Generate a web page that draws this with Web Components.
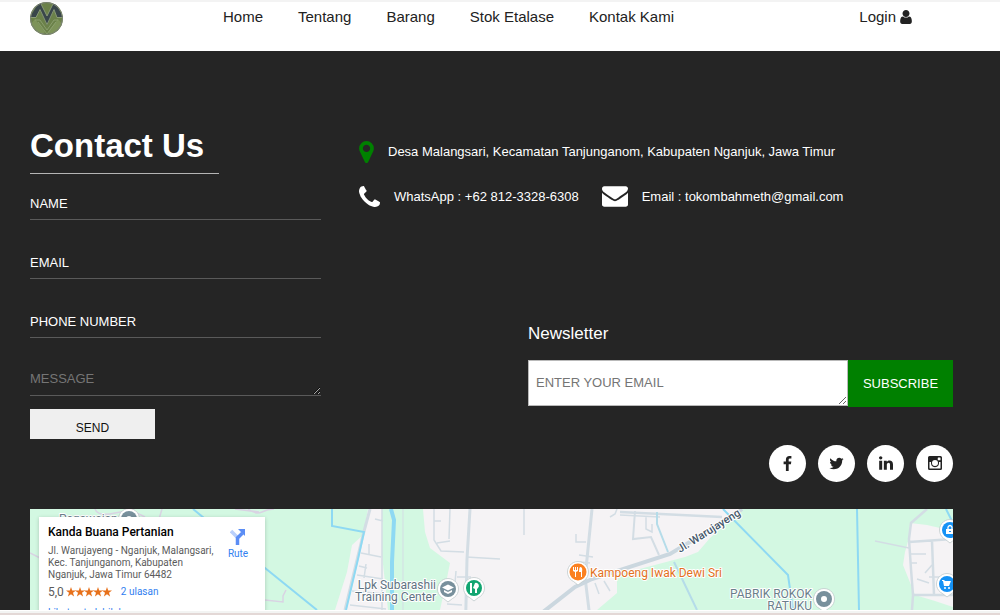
<!DOCTYPE html>
<html lang="id">
<head>
<meta charset="utf-8">
<meta name="viewport" content="width=device-width, initial-scale=1">
<title>Kontak Kami</title>
<style>
  html, body { margin: 0; height: 100%; }
  body { font: 13px/20px "Liberation Sans", Arial, sans-serif; color: #fff; background: #252525; }
</style>
</head>
<body>
<toko-page>
  <site-header slot="header"></site-header>
  <contact-form slot="form"></contact-form>
  <contact-info slot="info"></contact-info>
  <news-letter slot="news"></news-letter>
  <social-links slot="social"></social-links>
  <store-map slot="map"></store-map>
</toko-page>

<script>
const define = (name, html) => {
  const template = document.createElement('template');
  template.innerHTML = html;
  customElements.define(name, class extends HTMLElement {
    constructor() {
      super();
      this.attachShadow({ mode: 'open' }).append(template.content.cloneNode(true));
    }
  });
};

/* Icon shapes: viewBox and path, looked up by the name attribute. */
const ICONS = {
  user: ['0 128 1280 1536', 'M1280 1399q0 109-62.5 187t-150.5 78h-854q-88 0-150.5-78t-62.5-187q0-85 8.500-160.500t31.500-152 58.500-131 94-89 134.500-34.500q131 128 313 128t313-128q76 0 134.500 34.500t94 89 58.500 131 31.500 152 8.500 160.500zm-256-887q0 159-112.500 271.500t-271.500 112.500-271.500-112.500-112.500-271.500 112.500-271.500 271.500-112.500 271.500 112.500 112.500 271.500z'],
  marker: ['0 128 1024 1536', 'M768 640q0-106-75-181t-181-75-181 75-75 181 75 181 181 75 181-75 75-181zm256 0q0 109-33 179l-364 774q-16 33-47.5 52t-67.5 19-67.5-19-46.5-52l-365-774q-33-70-33-179 0-212 150-362t362-150 362 150 150 362z'],
  phone: ['0 128 1408 1408', 'M1408 1240q0 27-10 70.5t-21 68.5q-21 50-122 106-94 51-186 51-27 0-52.5-3.5t-57.5-12.5-47.5-14.5-55.5-20.5-49-18q-98-35-175-83-128-79-264.5-215.5t-215.5-264.5q-48-77-83-175-3-9-18-49t-20.5-55.5-14.5-47.5-12.5-57.5-3.5-52.5q0-92 51-186 56-101 106-122 25-11 68.5-21t70.5-10q14 0 21 3 18 6 53 76 11 19 30 54t35 63.5 31 53.5q3 4 17.5 25t21.5 35.5 7 28.5q0 20-28.5 50t-62 55-62 53-28.5 46q0 9 5 22.5t8.5 20.5 14 24 11.5 19q76 137 174 235t235 174q2 1 19 11.5t24 14 20.5 8.5 22.5 5q18 0 46-28.5t53-62 55-62 50-28.5q14 0 28.5 7t35.5 21.5 25 17.5q25 15 53.5 31t63.5 35 54 30q70 35 76 53 3 7 3 21z'],
  envelope: ['0 256 1792 1408', 'M1792 710v794q0 66-47 113t-113 47h-1472q-66 0-113-47t-47-113v-794q44 49 101 87 362 246 497 345 57 42 92.5 65.5t94.5 48 110 24.5h2q51 0 110-24.5t94.5-48 92.5-65.5q170-123 498-345 57-39 100-87zm0-294q0 79-49 151t-122 123q-376 261-468 325-10 7-42.5 31t-54 38.8-52 33.2-57.5 27-50 9h-2q-23 0-50-9t-57.5-27-52-33.2-54-38.8-42.5-31q-91-64-262-182.5t-205-142.5q-62-42-117-115.500t-55-136.500q0-78 41.500-130t118.500-52h1472q65 0 112.500 47t47.500 113z'],
  facebook: ['31 0 864 1664', 'M895 12v264h-157q-86 0-116 36t-30 108v189h293l-39 296h-254v759h-306v-759h-255v-296h255v-218q0-186 104-288.500t277-102.500q147 0 228 12z'],
  twitter: ['0 256 1664 1280', 'M1620 408q-67 98-162 167 1 14 1 42 0 130-38 259.500t-115.500 248.500-184.500 210.500-258 146-323 54.500q-271 0-496-145 35 4 78 4 225 0 401-138-105-2-188-64.500t-114-159.500q33 5 61 5 43 0 85-11-112-23-185.500-111.500t-73.500-205.500v-4q68 38 146 41-66-44-105-115t-39-154q0-88 44-163 121 149 294.500 238.500t371.500 99.500q-8-38-8-74 0-134 94.500-228.500t228.500-94.500q140 0 236 102 109-21 205-78-37 115-142 178 93-10 186-50z'],
  linkedin: ['0 148 1536 1468', 'M349 625v991h-330v-991h330zm21-306q1 73-50.5 122t-135.5 49h-2q-82 0-132-49t-50-122q0-74 51.500-122.500t134.500-48.500 133 48.500 51 122.500zm1166 729v568h-329v-530q0-105-40.500-164.500t-126.500-59.500q-63 0-105.500 34.500t-63.500 85.500q-11 30-11 81v553h-329q2-399 2-647t-1-296l-1-48h329v144h-2q20-32 41-56t56.500-52 87-43.500 114.500-15.500q171 0 275 113.500t104 332.500z'],
  instagram: ['0 0 28 28', 'M3 0h22q3 0 3 3v22q0 3-3 3h-22q-3 0-3-3v-22q0-3 3-3zm0 12v12q0 1 1 1h20q1 0 1-1v-12h-3q1 10-8 10.500q-9-.5-8-10.500zm11-4a6 6 0 1 0 0 12a6 6 0 1 0 0-12zm6.500-5q-1 0-1 1v3.500q0 1 1 1h3.500q1 0 1-1v-3.500q0-1-1-1z']
};
customElements.define('fa-icon', class extends HTMLElement {
  constructor() {
    super();
    this.attachShadow({ mode: 'open' });
  }
  connectedCallback() {
    const [box, path] = ICONS[this.getAttribute('name')];
    this.shadowRoot.innerHTML = `
      <style>:host { display: block; flex: none } svg { display: block; width: 100%; height: 100%; fill: currentColor }</style>
      <svg viewBox="${box}" aria-hidden="true"><path fill-rule="evenodd" d="${path}"/></svg>`;
  }
});

define('toko-page', `
  <style>
    :host { display: flex; flex-direction: column; height: 100vh; }
    main { flex: 1; min-height: 0; overflow: hidden; padding: 75px 47px 0 30px; }
    .top { display: grid; grid-template-columns: 291px 1fr; column-gap: 38px; }
    .side { display: flex; flex-direction: column; }
    ::slotted([slot=news]), ::slotted([slot=social]) { align-self: flex-end; }
    .edge { height: 2px; flex: none; background: #f3f4f3; border-bottom: 2px solid #e3d8d6; border-top: 1px solid #fff; }
    @media (max-width: 820px) { .top { grid-template-columns: 1fr; row-gap: 30px; } main { overflow: visible; } }
  </style>
  <slot name="header"></slot>
  <main>
    <div class="top">
      <slot name="form"></slot>
      <div class="side">
        <slot name="info"></slot>
        <slot name="news"></slot>
        <slot name="social"></slot>
      </div>
    </div>
    <slot name="map"></slot>
  </main>
  <div class="edge"></div>`);

define('site-header', `
  <style>
    :host { display: flex; flex: none; align-items: flex-start; height: 49px; padding: 0 88px 0 30px;
      background: #fff; border-top: 2px solid #f3f3f3; font-size: 15px; line-height: 30px; }
    .logo { flex: none; width: 33px; height: 33px; }
    .logo svg { display: block; width: 33px; height: 33px; }
    nav { display: flex; gap: 35px; margin: 0 auto 0 160px; }
    a { color: #222; text-decoration: none; white-space: nowrap; }
    .login { display: flex; align-items: center; gap: 4px; }
    fa-icon { width: 12px; height: 14px; }
  </style>
  <a class="logo" href="#" aria-label="Beranda">
    <svg viewBox="0 0 33 33" aria-hidden="true">
      <defs><clipPath id="c"><circle cx="16.500" cy="16.500" r="16.500"/></clipPath></defs>
      <g clip-path="url(#c)">
        <path fill="#6b8149" d="M0 0h33v33H0z"/>
        <path fill="#7d9359" d="M5 17l10 13-3 3-12-10zM28 17l-10 13 3 3 12-10z"/>
        <path fill="#39464a" d="M0 15L8 2l3 0 6 12 6-12h3l7 13h-6l-3-7-7 15-7-15-4 7z"/>
        <path fill="none" stroke="#94a482" stroke-width=".8" d="M0 15.500h6l4-8 7 15 7-15 3 8h6M11 2l6 12 6-12"/>
        <path fill="none" stroke="#92a577" stroke-width=".8" d="M5 18h5l7 10 7-10h4M8 20l9 12 9-12"/>
      </g>
      <circle cx="16.500" cy="16.500" r="16" fill="none" stroke="#7c8278"/>
    </svg>
  </a>
  <nav>
    <a href="#">Home</a><a href="#">Tentang</a><a href="#">Barang</a><a href="#">Stok Etalase</a><a href="#">Kontak Kami</a>
  </nav>
  <a class="login" href="#">Login <fa-icon name="user"></fa-icon></a>`);

define('contact-form', `
  <style>
    :host { display: block; }
    h1 { width: fit-content; margin: 0; padding: 0 15px 7px 0; border-bottom: 1px solid #b5b5b5; font-size: 33px; line-height: 40px; }
    form { display: flex; flex-direction: column; margin-top: 20px; gap: 33px; }
    .field { display: grid; }
    .field > * { grid-area: 1 / 1; }
    label { pointer-events: none; }
    input, textarea { box-sizing: border-box; width: 100%; margin: 0; padding: 0; border: 0; border-bottom: 1px solid #5a5a5a;
      border-radius: 0; outline: 0; background: none; color: #fff; font: inherit; }
    input { height: 26px; }
    .last { display: flex; flex-direction: column; align-items: flex-start; gap: 13px; }
    textarea { height: 25px; min-height: 25px; line-height: 16px; }
    textarea::placeholder { color: #757575; }
    button { width: 125px; height: 30px; margin: 0; padding: 8px 0 0; border: 0; background: #efefef; color: #111; font: inherit; font-size: 12px; }
  </style>
  <h1>Contact Us</h1>
  <form>
    <div class="field"><input id="n" type="text"><label for="n">NAME</label></div>
    <div class="field"><input id="e" type="email"><label for="e">EMAIL</label></div>
    <div class="field"><input id="p" type="tel"><label for="p">PHONE NUMBER</label></div>
    <div class="last">
      <textarea aria-label="Message" placeholder="MESSAGE"></textarea>
      <button type="button">SEND</button>
    </div>
  </form>`);

define('contact-info', `
  <style>
    :host { display: flex; flex-direction: column; gap: 24px; padding-top: 16px; }
    .row { display: flex; gap: 23px; }
    .item { display: flex; align-items: center; gap: 14px; white-space: nowrap; }
    .marker { width: 15px; height: 22px; margin: -1px 0; color: green; }
    .phone { width: 21px; height: 21px; }
    .mail { width: 26px; height: 21px; }
  </style>
  <div class="row"><span class="item"><fa-icon class="marker" name="marker"></fa-icon><span>Desa Malangsari, Kecamatan Tanjunganom, Kabupaten Nganjuk, Jawa Timur</span></span></div>
  <div class="row">
    <span class="item"><fa-icon class="phone" name="phone"></fa-icon><span>WhatsApp : +62 812-3328-6308</span></span>
    <span class="item"><fa-icon class="mail" name="envelope"></fa-icon><span>Email : tokombahmeth@gmail.com</span></span>
  </div>`);

define('news-letter', `
  <style>
    :host { display: block; width: 425px; max-width: 100%; margin-top: 117px; }
    label { display: block; margin-bottom: 16px; font-size: 17px; }
    .bar { display: flex; align-items: flex-start; }
    textarea { box-sizing: border-box; flex: 1; min-width: 0; height: 46px; margin: 0; padding: 12px 7px; border: 1px solid #b9b9b9;
      border-radius: 0; outline: 0; background: #fff; color: #222; font: inherit; overflow: hidden; }
    textarea::placeholder { color: #757575; }
    button { width: 105px; height: 47px; padding: 0; border: 0; background: green; color: #fff; font: inherit; }
  </style>
  <label for="m">Newsletter</label>
  <div class="bar"><textarea id="m" rows="1" placeholder="ENTER YOUR EMAIL"></textarea><button type="button">SUBSCRIBE</button></div>`);

define('social-links', `
  <style>
    :host { display: flex; gap: 12px; margin-top: 38px; }
    a { display: grid; place-items: center; width: 37px; height: 36px; padding-bottom: 1px; box-sizing: border-box; height: 37px; border-radius: 50%; background: #fff; color: #222; }
    fa-icon { width: 14px; height: 14px; }
    [name=facebook], [name=twitter] { width: 15px; height: 15px; }
  </style>
  <a href="#" aria-label="Facebook"><fa-icon name="facebook"></fa-icon></a>
  <a href="#" aria-label="Twitter"><fa-icon name="twitter"></fa-icon></a>
  <a href="#" aria-label="LinkedIn"><fa-icon name="linkedin"></fa-icon></a>
  <a href="#" aria-label="Instagram"><fa-icon name="instagram"></fa-icon></a>`);

define('store-map', `
  <style>
    :host { display: block; position: relative; height: 240px; margin-top: 27px; overflow: hidden; background: #d3f8e2;
      font-family: Roboto, sans-serif; }
    .map { display: block; width: 100%; height: 100%; }
    .map text { font-size: 12px; stroke: #fff; stroke-width: 2px; paint-order: stroke; stroke-linejoin: round; }
    .map .road { font-size: 11px; font-weight: 500; }
    .card { position: absolute; left: 9px; top: 8px; box-sizing: border-box; width: 226px; padding: 9px 9px 12px; background: #fff;
      box-shadow: 0 1px 4px #0003; color: #5b5b5b; font-size: 10px; line-height: 12px; }
    .cols { display: flex; justify-content: space-between; }
    h2 { margin: 0 0 6px; color: #000; font-size: 12px; line-height: 13px; font-weight: 500; white-space: nowrap; }
    p { margin: 0; }
    .card a { color: #3180f0; text-decoration: none; }
    .route { display: flex; flex-direction: column; align-items: center; gap: 3px; width: 36px; padding-top: 2px; }
    .rate { display: flex; align-items: center; gap: 2px; margin: 5px 0 9px; }
    .rate b { font-size: 12px; font-weight: 400; }
    .rate a { margin-left: 7px; }
  </style>
  <svg class="map" viewBox="0 0 923 240" preserveAspectRatio="xMinYMin slice" role="img" aria-label="Peta">
    <defs>
      <path id="pin" d="M0 13L-4.500 9.500A10.500 10.500 0 1 1 4.500 9.500z" fill="#fff" stroke="#b9c4c6" stroke-width=".7"/>
    </defs>
    <g fill="#f5f3f5">
      <path d="M338 0L333 26 322 36 317 63 305 101 280 240H375L358 101 352 46V0z"/>
      <path d="M393 0L395 23 400 39 420 54 417 69 410 101 400 240H480L567 101 587 84V66L655 48 668 43 680 29 712 0z"/>
      <path d="M880 14L897 16 923 22V98L905 92 885 86 873 56 875 43 879 29z"/>
    </g>
    <g fill="none" stroke="#d3dde4" stroke-width="1.500">
      <path stroke="#d9d3e3" d="M65 0q3 8 20 4t30 4M132 0l-3 10M218 0q8 6 14 3t12-3M0 44l10 5M205 0l24 3M235 91l18 2v-6l3-6"/>
      <path d="M331 44l20 4M339 35v10M329 57l8 2M327 66l26 4M336 55l-2 14M322 82l33 3M320 96l36 4M345 10l8 2M352 0v101"/>
      <path stroke-width="1" d="M373 0v101"/>
      <path d="M404 0v31l7 11 23 1M404 12h7M420 0l-1 30M407 34l13-2M426 62l-1 12M427 68h14M417 95l15 1M436 48l34 2M494 0v26M546 25v8h10M549 46l14 2M550 53l10 1M565 74l4 11M574 72l6 10M587 0l-2 5-5 3M590 6l40 2M616 8v12l6 3v-8"/>
      <path stroke-width="3" d="M340 0L333 26 315 101M440 0L437 50 435 140M562 0L557 50 555 68 559 101V200"/>
      <path stroke-width="2" d="M605 2l-2 28 18-2 8 18"/>
      <path stroke-width="2.500" d="M897 0L881 14 879 30 881 60 883 86 882 101M879 33l44-3M902 32l2 54M883 86h40M590 3l102 5"/>
      <path d="M845 32l34 7M880 45h16M880 54h7M895 64l7-8M887 70l12 4M899 68h24"/>
    </g>
    <path fill="none" stroke="#cbd7df" stroke-width="4" d="M460 150L513 103 545 78 562 70 640 45 670 27 712 0"/>
    <g fill="none" stroke="#8ed9f3" stroke-width="2">
      <path d="M163 0L235 59 287 101M302 0V17L334 23 328 50 316 101M693 0L758 66 763 101M827 0L829 101M916 0l7 14"/>
      <path stroke-width="4" d="M361 0L364 11 362 53V240"/>
      <path stroke="#b5dce9" d="M627 3v12l11 28M644 53L667 101"/>
    </g>
    <g>
      <text x="406" y="80" text-anchor="end" fill="#5f7382">Lpk Subarashii</text>
      <text x="406" y="92" text-anchor="end" fill="#5f7382">Training Center</text>
      <text x="560" y="68" fill="#e2711d">Kampoeng Iwak Dewi Sri</text>
      <text x="782" y="89" text-anchor="end" fill="#6b7f8b">PABRIK ROKOK</text>
      <text x="782" y="101" text-anchor="end" fill="#6b7f8b">RATUKU</text>
      <text class="road" transform="translate(650 44) rotate(-32)" fill="#46586b">Jl. Warujayeng</text>
      <text x="29" y="14" fill="#6b7f8b">Pegawaian dr</text>
    </g>
    <g transform="translate(99 10)"><use href="#pin"/><circle r="8" fill="#78909c"/><circle r="3" fill="#fff"/></g>
    <g transform="translate(418 80)"><use href="#pin"/><circle r="8" fill="#78909c"/><path fill="#fff" d="M0-4.500L6-1.500 0 1.500-6-1.500zM-4 1L0 3 4 1V3L0 5-4 3z"/></g>
    <g transform="translate(444 79)"><use href="#pin"/><circle r="8" fill="#12a571"/><path fill="#fff" d="M-4-5h2V5h-2zM1-5a3 3 0 0 1 3 5l-1 1V5H1V1L-1 0z"/></g>
    <g transform="translate(548 63)"><use href="#pin"/><circle r="8.500" fill="#fb8020"/><path fill="#fff" d="M-5-5h1v3h1v-3h1v3h1v-3h1v4l-2 1V5h-1V0l-2-1zM2-5q3 0 2 5v5H3V0H1q0-4 1-5z"/></g>
    <g transform="translate(794 90)"><use href="#pin"/><circle r="8" fill="#78909c"/><circle r="3" fill="#fff"/></g>
    <g transform="translate(920 21)"><use href="#pin"/><circle r="8" fill="#1592f5"/><path fill="#fff" d="M-4-1h8v5h-8z"/><path fill="none" stroke="#fff" stroke-width="1.300" d="M-2-1v-2q2-3 4 0v2"/><path fill="#1592f5" d="M-1 1h2v1h-2z"/></g>
    <g transform="translate(917 75)"><use href="#pin"/><circle r="8" fill="#1592f5"/><path fill="#fff" d="M-5-4h2l1 1h6l-2 5h-5L-4-3h-1z"/><circle cx="-2" cy="4" r="1" fill="#fff"/><circle cx="2" cy="4" r="1" fill="#fff"/></g>
  </svg>
  <section class="card">
    <div class="cols">
      <div>
        <h2>Kanda Buana Pertanian</h2>
        <p>Jl. Warujayeng - Nganjuk, Malangsari,<br>Kec. Tanjunganom, Kabupaten<br>Nganjuk, Jawa Timur 64482</p>
      </div>
      <a class="route" href="#">
        <svg width="16" height="17" viewBox="0 0 16 17" aria-hidden="true">
          <path d="M1 3l6 6" stroke="#bad0fb" stroke-width="3.500"/>
          <path d="M7.500 17V10l5-5" fill="none" stroke="#5b8df5" stroke-width="3.500"/><path fill="#5b8df5" d="M8 1h7v7z"/>
        </svg>
        <span>Rute</span>
      </a>
    </div>
    <div class="rate"><b>5,0</b>
      <svg width="46" height="10" viewBox="0 0 46 10" fill="#e7711b" role="img" aria-label="5 bintang">
        <defs><path id="s" d="M5 0L6.200 3.500H10L7 5.700 8.100 9.400 5 7.200 1.900 9.400 3 5.700 0 3.500H3.800z"/></defs>
        <use href="#s"/><use href="#s" x="9"/><use href="#s" x="18"/><use href="#s" x="27"/><use href="#s" x="36"/>
      </svg>
      <a href="#">2 ulasan</a>
    </div>
    <a href="#">Lihat peta lebih besar</a>
  </section>`);
</script>
</body>
</html>
